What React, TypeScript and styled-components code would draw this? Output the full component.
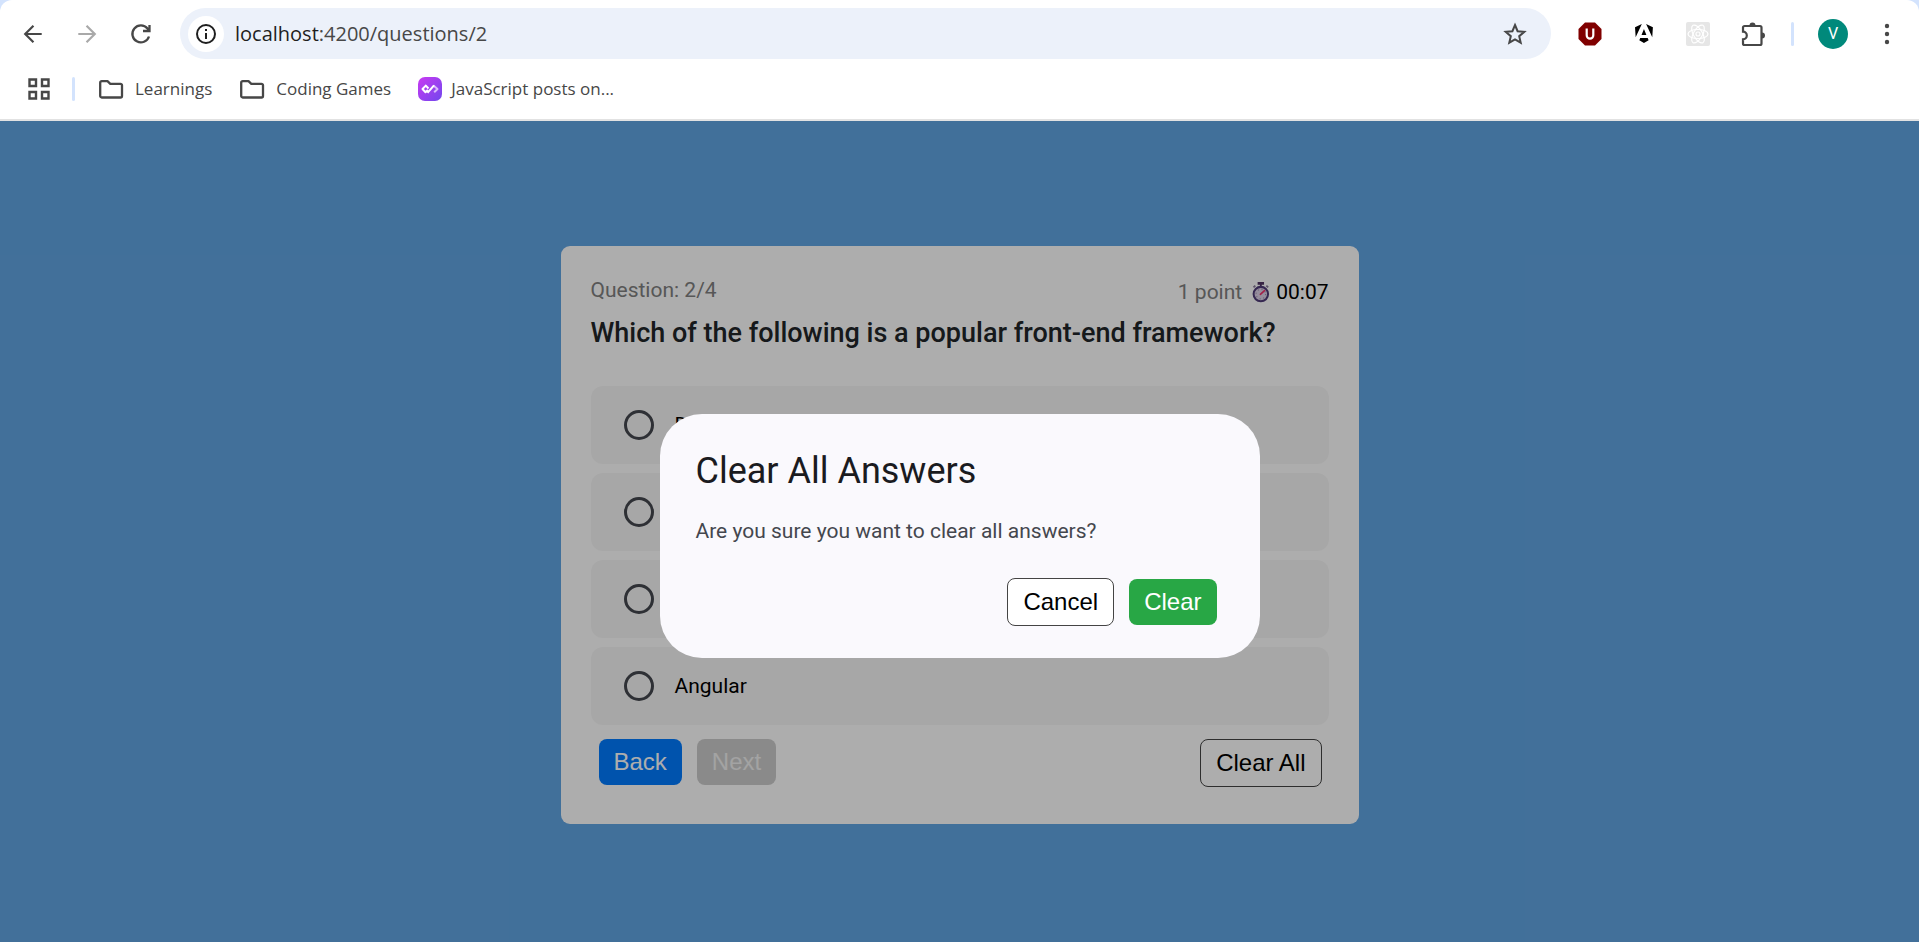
import React from "react";
import styled, { createGlobalStyle } from "styled-components";

const Global = createGlobalStyle`
  *, *::before, *::after { box-sizing: border-box; }
  html, body, #root { height: 100%; }
  body { margin: 0; background: #d3e3fd; font-family: Roboto, "Liberation Sans", sans-serif; color: #000; }
  h1, h2, p, fieldset { margin: 0; padding: 0; border: 0; min-width: 0; }
  svg { display: block; }
`;

const Shell = styled.div`
  min-height: 100%;
  display: flex;
  flex-direction: column;
`;

const Chrome = styled.header`
  background: #fff;
  border-bottom: 2px solid #e2e2e2;
  border-radius: 12px 12px 0 0;
  padding: 8px 17px 0 18px;
  font-family: "Open Sans", "Liberation Sans", sans-serif;
  color: #474747;
`;

const Toolbar = styled.div`
  display: flex;
  align-items: center;
  height: 51px;
`;

const IconButton = styled.button<{ $gap?: number }>`
  display: grid;
  place-items: center;
  width: 30px;
  height: 30px;
  padding: 0;
  margin-right: ${(p) => p.$gap ?? 24}px;
  border: 0;
  background: none;
  color: #474747;
  flex: none;
`;

const AddressBar = styled.form`
  flex: 1;
  display: flex;
  align-items: center;
  height: 51px;
  padding: 0 21px 0 8px;
  margin-right: 24px;
  border-radius: 26px;
  background: #ecf1fa;
`;

const SiteInfo = styled.button`
  display: grid;
  place-items: center;
  width: 36px;
  height: 36px;
  padding: 0;
  border: 0;
  border-radius: 50%;
  background: #fff;
  color: #1f1f1f;
  flex: none;
`;

const Url = styled.a`
  flex: 1;
  margin-left: 11px;
  font-size: 20px;
  line-height: 28px;
  color: #474747;
  text-decoration: none;
  span { color: #1f1f1f; }
`;

const Separator = styled.span`
  width: 3px;
  height: 24px;
  border-radius: 2px;
  background: #d3e3fd;
  flex: none;
`;

const Avatar = styled.button`
  width: 30px;
  height: 30px;
  margin: 0 24px;
  padding: 0;
  border: 0;
  border-radius: 50%;
  background: #00897b;
  color: #fff;
  font: 16px/30px Roboto, sans-serif;
  flex: none;
`;

const Bookmarks = styled.nav`
  display: flex;
  align-items: center;
  gap: 18px;
  height: 60px;
  padding-left: 6px;
`;

const BookmarkList = styled.div`
  display: flex;
  align-items: center;
  gap: 27px;
  padding-left: 5px;
`;

const Bookmark = styled.a`
  display: flex;
  align-items: center;
  gap: 9px;
  font-size: 17px;
  line-height: 24px;
  color: #474747;
  text-decoration: none;
`;

const Page = styled.main`
  flex: 1;
  display: grid;
  place-items: center;
  padding: 6px 16px 0;
  background: #61a5e3;
`;

const Card = styled.section`
  width: 100%;
  max-width: 798px;
  padding: 30px;
  border-radius: 9px;
  background: #fff;
`;

const CardTop = styled.div`
  display: flex;
  justify-content: space-between;
  padding-top: 1px;
  font-size: 21px;
  line-height: 26px;
`;

const Muted = styled.span`
  color: #808080;
`;

const Status = styled.div`
  display: flex;
  align-items: center;
  gap: 6px;
  padding-top: 2px;
`;

const Question = styled.h1`
  margin: 10px 0 35px;
  font-size: 27px;
  line-height: 36px;
  font-weight: 500;
  color: #212529;
`;

const Options = styled.fieldset`
  display: grid;
  gap: 9px;
`;

const Option = styled.label`
  display: flex;
  align-items: center;
  gap: 21px;
  height: 78px;
  padding: 0 33px;
  border-radius: 12px;
  background: #f7f7f7;
  font-size: 21px;
  line-height: 30px;
`;

const Radio = styled.input`
  appearance: none;
  width: 30px;
  height: 30px;
  margin: 0;
  border: 3px solid #44474e;
  border-radius: 50%;
  &:checked { border-width: 9px; }
`;

const Actions = styled.div`
  display: flex;
  align-items: flex-start;
  gap: 15px;
  padding: 14px 7px 7px 8px;
`;

const Spacer = styled.span`
  flex: 1;
`;

const tones = {
  primary: "background: #007bff; color: #fff;",
  muted: "background: #ccc; color: #f0f0f0;",
  success: "background: #28a745; color: #fff;",
  outline: "background: #fff; color: #000; border: 1px solid #444;",
};

const Button = styled.button<{ $tone: keyof typeof tones }>`
  padding: 8px 15px;
  border: 0;
  border-radius: 8px;
  font: 24px/30px "Liberation Sans", Arial, sans-serif;
  ${(p) => tones[p.$tone]}
`;

const Backdrop = styled.div`
  position: absolute;
  inset: 0;
  display: grid;
  place-items: center;
  padding: 8px 16px 0;
  background: rgba(0, 0, 0, 0.32);
`;

const Stage = styled.div`
  position: relative;
  flex: 1;
  display: flex;
`;

const Dialog = styled.section`
  width: 100%;
  max-width: 600px;
  padding: 33px 43px 32px 36px;
  border-radius: 42px;
  background: #faf9fd;
`;

const DialogTitle = styled.h2`
  font-size: 36px;
  line-height: 48px;
  font-weight: 400;
  color: #1a1b1f;
`;

const DialogText = styled.p`
  margin: 21px 0 32px;
  font-size: 21px;
  line-height: 30px;
  color: #44474e;
`;

const DialogActions = styled.div`
  display: flex;
  justify-content: flex-end;
  align-items: center;
  gap: 15px;
`;

const Line = ({ d, size = 24, color = "currentColor", width = 2 }: { d: string; size?: number; color?: string; width?: number }) => (
  <svg width={size} height={size} viewBox="0 0 24 24" fill="none" stroke={color} strokeWidth={width} aria-hidden="true">
    <path d={d} />
  </svg>
);

const Folder = () => (
  <svg width="28" height="24" viewBox="0 0 28 24" fill="none" stroke="#474747" strokeWidth="2.3" strokeLinejoin="round" aria-hidden="true">
    <path d="M2.200 5.700a1.500 1.500 0 0 1 1.500-1.500h5.800l2.800 2.600h10.200a1.500 1.500 0 0 1 1.500 1.500v10.700a1.500 1.500 0 0 1-1.500 1.500H3.700a1.500 1.500 0 0 1-1.500-1.500z" />
  </svg>
);

const Stopwatch = () => (
  <svg width="22" height="22" viewBox="-4 0 24 23" aria-hidden="true">
    <path d="M6.500 .5h7v3h-7zM9 3h2v3H9z" fill="#503464" />
    <path d="M2 6.500l2-2M18 6.500l-2-2" stroke="#8b7d9b" strokeWidth="2" />
    <circle cx="10" cy="13.800" r="7.900" fill="#dfd2e8" stroke="#503b78" strokeWidth="2.200" />
    <circle cx="10" cy="13.800" r="5.200" fill="none" stroke="#9a8fae" strokeWidth="1.200" strokeDasharray="1.200 2.900" />
    <path d="M9.500 14l4.500-4" stroke="#f0306a" strokeWidth="1.800" strokeLinecap="round" />
  </svg>
);

const DailyDev = () => (
  <svg width="24" height="24" viewBox="0 0 24 24" aria-hidden="true">
    <defs>
      <linearGradient id="dd" x1="0" y1="0" x2="1" y2="1">
        <stop offset="0" stopColor="#c93af2" />
        <stop offset="1" stopColor="#7147ed" />
      </linearGradient>
    </defs>
    <rect width="24" height="24" rx="7" fill="url(#dd)" />
    <path d="M15.500 8.500L19.500 12l-3.300 3.300" fill="none" stroke="#d9b8fa" strokeWidth="2" strokeLinejoin="round" />
    <path d="M10.500 11.500L7.800 8.600 4.500 12l3 3.200 2.300-2.300M9.500 15.800l6.500-7.500" fill="none" stroke="#fff" strokeWidth="2" strokeLinejoin="round" />
  </svg>
);

/* The middle two answers stay unlabelled on screen while the dialog is open. */
const ANSWERS = ["Django", "", "", "Angular"];

export default function App() {
  return (
    <>
      <Global />
      <Shell>
        <Chrome>
          <Toolbar>
            <IconButton aria-label="Back"><Line d="M21.500 12H4M12.500 3L3.500 12l9 9" size={22} width={2.400} /></IconButton>
            <IconButton aria-label="Forward"><Line d="M2.500 12h17.500M11.500 3l9 9-9 9" size={22} width={2.400} color="#a9a9a9" /></IconButton>
            <IconButton aria-label="Reload"><Line d="M20 14.500A8.500 8.500 0 1 1 18.500 6.500L20.500 9M20.500 3V9H14" size={24} width={2.300} /></IconButton>
            <AddressBar>
              <SiteInfo type="button" aria-label="Site information">
                <svg width="24" height="24" viewBox="0 0 24 24" fill="none" stroke="currentColor" strokeWidth="2" aria-hidden="true">
                  <circle cx="12" cy="12" r="9" /><path d="M12 11v6M12 7v2" />
                </svg>
              </SiteInfo>
              <Url href="#url"><span>localhost</span>:4200/questions/2</Url>
              <IconButton type="button" $gap={0} aria-label="Bookmark this page">
                <Line d="M12 3l2.600 6.200 6.700.6-5.100 4.400 1.500 6.500L12 17.300l-5.700 3.400 1.500-6.500-5.100-4.400 6.700-.6z" width={2} />
              </IconButton>
            </AddressBar>
            <IconButton aria-label="Content blocker">
              <svg width="24" height="24" viewBox="0 0 24 24" aria-hidden="true">
                <path d="M7 .5h10l6.500 6.500v10L17 23.500H7L.5 17V7z" fill="#800000" />
                <path d="M8.700 6.500v6.800a3.300 3.300 0 0 0 6.600 0V6.500" fill="none" stroke="#fff" strokeWidth="2.200" />
              </svg>
            </IconButton>
            <IconButton aria-label="Angular DevTools">
              <svg width="18" height="19" viewBox="0 0 223 236" aria-hidden="true">
                <path d="m222.077 39.192-8.019 125.923L137.387 0l84.690 39.192Zm-53.105 162.825-57.933 33.056-57.934-33.056 11.783-28.556h92.301l11.783 28.556ZM111.039 62.675l30.357 73.803H80.681l30.358-73.803ZM7.937 165.115 0 39.192 84.690 0 7.937 165.115Z" fill="#000" />
              </svg>
            </IconButton>
            <IconButton aria-label="React Developer Tools">
              <svg width="24" height="24" viewBox="0 0 24 24" aria-hidden="true">
                <rect width="24" height="24" rx="2" fill="#e6e6e6" />
                <g fill="none" stroke="#fff" strokeWidth="1.200">
                  <ellipse cx="12" cy="12" rx="10" ry="4.500" />
                  <ellipse cx="12" cy="12" rx="10" ry="4.500" transform="rotate(60 12 12)" />
                  <ellipse cx="12" cy="12" rx="10" ry="4.500" transform="rotate(120 12 12)" />
                  <circle cx="12" cy="12" r="2" />
                </g>
              </svg>
            </IconButton>
            <IconButton aria-label="Extensions">
              <svg width="26" height="26" viewBox="-1 0 26 26" aria-hidden="true">
                <path d="M3 6.500A1.500 1.500 0 0 1 4.500 5H20a1.500 1.500 0 0 1 1.500 1.500v16A1.500 1.500 0 0 1 20 24H4.500A1.500 1.500 0 0 1 3 22.500v-4.200a3.800 3.800 0 0 0 0-7.600z" fill="none" stroke="#474747" strokeWidth="2.200" />
                <path d="M9.500 4.500a3 3 0 0 1 6 0zM22 11.500a3 3 0 0 1 0 6z" fill="#474747" />
              </svg>
            </IconButton>
            <Separator />
            <Avatar aria-label="Profile V">V</Avatar>
            <IconButton $gap={0} aria-label="Menu">
              <svg width="24" height="24" viewBox="0 0 24 24" fill="#474747" aria-hidden="true">
                <circle cx="12" cy="4" r="2.200" /><circle cx="12" cy="12" r="2.200" /><circle cx="12" cy="20" r="2.200" />
              </svg>
            </IconButton>
          </Toolbar>
          <Bookmarks aria-label="Bookmarks">
            <IconButton $gap={0} aria-label="Apps"><Line d="M2.500 2.500h6.500v6.500H2.500zM15 2.500h6.500v6.500H15zM2.500 15h6.500v6.500H2.500zM15 15h6.500v6.500H15z" width={2.400} /></IconButton>
            <Separator />
            <BookmarkList>
              <Bookmark href="#learnings"><Folder />Learnings</Bookmark>
              <Bookmark href="#games"><Folder />Coding Games</Bookmark>
              <Bookmark href="#posts"><DailyDev />JavaScript posts on...</Bookmark>
            </BookmarkList>
          </Bookmarks>
        </Chrome>
        <Stage>
          <Page>
            <Card>
              <CardTop>
                <Muted>Question: 2/4</Muted>
                <Status><Muted>1 point</Muted><Stopwatch /><span>00:07</span></Status>
              </CardTop>
              <Question>Which of the following is a popular front-end framework?</Question>
              <Options aria-label="Answers">
                {ANSWERS.map((answer, i) => (
                  <Option key={i}>
                    <Radio type="radio" name="answer" value={i} aria-label={answer || `Answer ${i + 1}`} />
                    {answer}
                  </Option>
                ))}
              </Options>
              <Actions>
                <Button $tone="primary">Back</Button>
                <Button $tone="muted" disabled>Next</Button>
                <Spacer />
                <Button $tone="outline">Clear All</Button>
              </Actions>
            </Card>
          </Page>
          <Backdrop>
            <Dialog role="dialog" aria-modal="true" aria-labelledby="dialog-title">
              <DialogTitle id="dialog-title">Clear All Answers</DialogTitle>
              <DialogText>Are you sure you want to clear all answers?</DialogText>
              <DialogActions>
                <Button $tone="outline">Cancel</Button>
                <Button $tone="success">Clear</Button>
              </DialogActions>
            </Dialog>
          </Backdrop>
        </Stage>
      </Shell>
    </>
  );
}
